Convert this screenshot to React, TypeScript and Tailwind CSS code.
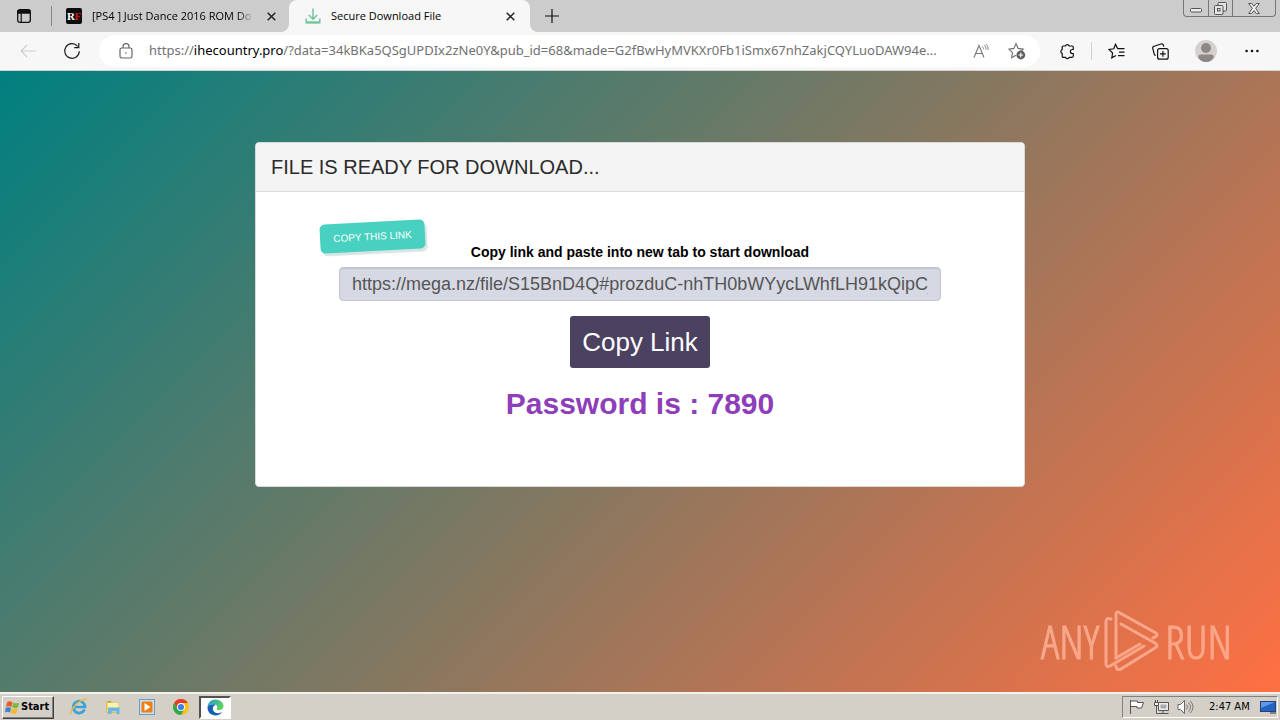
import React from "react";

function TabActionsIcon() {
  return (
    <svg width="14" height="14" viewBox="0 0 14 14" fill="none" stroke="#111">
      <rect x="0.7" y="0.7" width="12.6" height="12.6" rx="2" strokeWidth="1.3" />
      <path d="M1 1.5h12v2.7H1z" fill="#111" />
      <path d="M4.2 4v9" strokeWidth="1.2" />
    </svg>
  );
}

function CloseIcon() {
  return (
    <svg width="9" height="9" viewBox="0 0 9 9" stroke="#222" strokeWidth="1.5">
      <path d="M0.7 0.7l7.6 7.6M8.3 0.7L0.7 8.3" />
    </svg>
  );
}

function DownloadIcon() {
  return (
    <svg width="16" height="16" viewBox="0 0 16 16" fill="none" stroke="#6fc69b" strokeWidth="1.5">
      <path d="M8 0.5v10.5M3.8 7L8 11.2 12.2 7" />
      <path d="M1.2 10.5v4.2h13.6v-4.2" />
      <path d="M1.5 14.3h13" strokeWidth="2" />
    </svg>
  );
}

function BackIcon() {
  return (
    <svg width="16" height="14" viewBox="0 0 16 14" fill="none" stroke="#cfcfcf" strokeWidth="1.2">
      <path d="M16 7H1M7 1L1 7l6 6" />
    </svg>
  );
}

function ReloadIcon() {
  return (
    <svg width="18" height="18" viewBox="0 0 18 18" fill="none" stroke="#1b1b1b" strokeWidth="1.2">
      <path d="M16.3 9.2A7.3 7.3 0 1 1 14.6 4.3" />
      <path d="M15.8 1v4.6h-4.6" />
    </svg>
  );
}

function LockIcon() {
  return (
    <svg width="14" height="16" viewBox="0 0 14 16" fill="none" stroke="#666" strokeWidth="1.2">
      <rect x="1" y="5" width="12" height="10" rx="1.8" />
      <path d="M4 5V3.6a3 3 0 0 1 6 0V5" />
      <circle cx="7" cy="10" r="0.8" fill="#666" stroke="none" />
    </svg>
  );
}

function ReadAloudIcon() {
  return (
    <svg width="16" height="16" viewBox="0 0 16 16" fill="none" stroke="#777" strokeWidth="1.1">
      <path d="M1 14.5L6 2.5 11 14.5M2.8 10.5h6.6" />
      <path d="M9 3.3c1 .8 1.4 1.8 1.4 3M11 1.9c1.4 1.2 2.1 2.6 2 4.6M12.8 1c1.7 1.5 2.5 3.5 2.3 6" strokeWidth="0.9" />
    </svg>
  );
}

function StarAddIcon() {
  return (
    <svg width="18" height="18" viewBox="0 0 18 18" fill="none" stroke="#6b6b6b" strokeWidth="1.1">
      <path d="M8 13.3l-4.4 2.4.9-5L.9 7.1l5-.7L8 1.6l2.2 4.8 5 .7-1.8 1.7" />
      <circle cx="12.8" cy="13" r="4.4" fill="#5b5b5b" stroke="none" />
      <path d="M12.8 10.6v4.8M10.4 13h4.8" stroke="#fff" />
    </svg>
  );
}

function PuzzleIcon() {
  return (
    <svg width="16" height="17" viewBox="0 0 16 17" fill="none" stroke="#111" strokeWidth="1.2" strokeLinejoin="round">
      <path d="M4.2 3h2.2a2 2 0 0 1 3.8 0h2.9c.7 0 1.2.5 1.2 1.2v2.3h-.9a2 2 0 0 0 0 4h.9v2.6c0 .7-.5 1.2-1.2 1.2h-2.8a2 2 0 0 1-3.8 0H4.4c-.7 0-1.2-.5-1.2-1.2v-2.7a2 2 0 0 1 0-3.8V4.2C3.2 3.5 3.5 3 4.2 3z" />
    </svg>
  );
}

function FavoritesIcon() {
  return (
    <svg width="18" height="16" viewBox="0 0 18 16" fill="none" stroke="#111" strokeWidth="1.2">
      <path d="M8 12.5l-4.2 2.3.8-4.8L1 6.5l4.800-.7L7.500 1.300l2.200 4.300h6.800M11 9.100h5.500M10 12.600h6.500" />
    </svg>
  );
}

function CollectionsIcon() {
  return (
    <svg width="17" height="17" viewBox="0 0 17 17" fill="none" stroke="#111" strokeWidth="1.2">
      <rect x="5.6" y="5.6" width="10.6" height="10.6" rx="2" />
      <path d="M10.9 8v5.8M8 10.9h5.8" />
      <path d="M3.8 12.4a2 2 0 0 1-1.6-1.4L.8 5.7a2 2 0 0 1 1.4-2.5L8.9 1a2 2 0 0 1 2.6 1.3l.3 1.3" />
    </svg>
  );
}

function ProfileIcon() {
  return (
    <svg width="22" height="22" viewBox="0 0 22 22">
      <circle cx="11" cy="11" r="11" fill="#d4d0ce" />
      <circle cx="11" cy="8" r="5" fill="#8c8886" />
      <path d="M3.2 17.2c0-2 1.4-2.7 3-2.7h9.6c1.6 0 3 .7 3 2.7C17.4 20 14.5 22 11 22s-6.4-2-7.8-4.8z" fill="#8c8886" />
    </svg>
  );
}

function WindowButtons() {
  return (
    <div className="flex h-[17px] w-[93px] rounded-b border border-t-0 border-[#777] text-[#555]">
      <button aria-label="Minimize" className="flex flex-1 items-center justify-center border-r border-[#777]">
        <svg width="12" height="15" viewBox="0 0 12 15" fill="#eee" stroke="#555">
          <rect x="0.5" y="7.5" width="11" height="3.5" rx="1" />
        </svg>
      </button>
      <button aria-label="Restore" className="flex flex-1 items-center justify-center border-r border-[#777]">
        <svg width="13" height="13" viewBox="0 0 13 13" fill="#e4e4e4" stroke="#555">
          <rect x="4" y="0.5" width="8.5" height="8.5" rx="1" />
          <rect x="0.5" y="3.5" width="8.5" height="9" rx="1" />
          <rect x="3.5" y="6.5" width="2.5" height="2.5" />
        </svg>
      </button>
      <button aria-label="Close window" className="flex w-[42px] items-center justify-center">
        <svg width="12" height="11" viewBox="0 0 12 11" fill="#eee" stroke="#555">
          <path d="M.7.5h3L6 3.2 8.3.5h3L7.7 5.3l3.6 5.2h-3L6 7.6l-2.3 2.9h-3l3.6-5.2z" />
        </svg>
      </button>
    </div>
  );
}

function TabBar() {
  return (
    <header className="flex h-8 justify-between bg-[#f7f7f7]">
      <div className="flex min-w-0">
        <div className="flex w-[289px] rounded-br-lg bg-[#cccccc]">
          <button aria-label="Tab actions" className="flex w-[51px] items-center pl-[17px]">
            <TabActionsIcon />
          </button>
          <div className="my-[6px] w-px bg-[#888]" />
          <div className="flex w-[237px] items-center pl-[14px] pr-[13px]">
            <svg width="16" height="16" viewBox="0 0 16 16" className="shrink-0">
              <rect width="16" height="16" rx="2" fill="#0b0b0b" />
              <text x="1" y="12" fontSize="11" fontWeight="700" fontFamily="Liberation Serif, serif" fill="#fff">R</text>
              <text x="8.5" y="12" fontSize="11" fontWeight="700" fontFamily="Liberation Serif, serif" fill="#d01818">F</text>
            </svg>
            <span className="ml-[10px] whitespace-nowrap bg-linear-to-r from-black from-90% to-[#aaa] bg-clip-text text-[11px] text-transparent">
              [PS4 ] Just Dance 2016 ROM Do
            </span>
            <button aria-label="Close first tab" className="ml-auto">
              <CloseIcon />
            </button>
          </div>
        </div>
        <div className="bg-[#cccccc]">
          <div className="flex h-8 w-[241px] items-center rounded-t-lg bg-[#f7f7f7] pl-[16px] pr-[15px]">
            <DownloadIcon />
            <span className="ml-[10px] text-[11px] text-black">Secure Download File</span>
            <button aria-label="Close second tab" className="ml-auto">
              <CloseIcon />
            </button>
          </div>
        </div>
      </div>
      <div className="flex flex-1 justify-between rounded-bl-lg bg-[#cccccc] pr-1">
        <button aria-label="New tab" className="flex w-[43px] items-center justify-center">
          <svg width="14" height="14" viewBox="0 0 14 14" stroke="#111" strokeWidth="1.2">
            <path d="M7 0v14M0 7h14" />
          </svg>
        </button>
        <WindowButtons />
      </div>
    </header>
  );
}

function Toolbar() {
  return (
    <nav className="flex h-[39px] items-center border-b border-[#d4d4d4] bg-[#f7f7f7]">
      <button aria-label="Back" className="ml-[20px]">
        <BackIcon />
      </button>
      <button aria-label="Refresh" className="ml-[27px]">
        <ReloadIcon />
      </button>
      <div className="ml-[18px] flex h-8 min-w-0 flex-1 items-center rounded-full bg-white pl-[20px] pr-[14px]">
        <LockIcon />
        <p className="ml-[16px] min-w-0 flex-1 overflow-hidden whitespace-nowrap font-['Noto_Sans',sans-serif] text-[13px] text-[#717171]">
          https://<span className="text-black">ihecountry.pro</span>
          /?data=34kBKa5QSgUPDIx2zNe0Y&amp;pub_id=68&amp;made=G2fBwHyMVKXr0Fb1iSmx67nhZakjCQYLuoDAW94e...
        </p>
        <button aria-label="Read aloud" className="ml-[12px]">
          <ReadAloudIcon />
        </button>
        <button aria-label="Add to favorites" className="ml-[19px]">
          <StarAddIcon />
        </button>
      </div>
      <div className="flex w-[240px] shrink-0 items-center pl-[19px]">
        <button aria-label="Extensions"><PuzzleIcon /></button>
        <div className="ml-[16px] h-[18px] w-px bg-[#d0d0d0]" />
        <button aria-label="Favorites" className="ml-[16px]"><FavoritesIcon /></button>
        <button aria-label="Collections" className="ml-[26px]"><CollectionsIcon /></button>
        <button aria-label="Profile" className="ml-[26px]"><ProfileIcon /></button>
        <button aria-label="Settings and more" className="ml-[28px]">
          <svg width="14" height="4" viewBox="0 0 14 4" fill="#111">
            <circle cx="1.6" cy="2" r="1.3" />
            <circle cx="7" cy="2" r="1.3" />
            <circle cx="12.4" cy="2" r="1.3" />
          </svg>
        </button>
      </div>
    </nav>
  );
}

function DownloadCard() {
  return (
    <section className="mx-auto w-full max-w-[770px] rounded border border-[#d9d9d9] bg-white pb-16 font-['Liberation_Sans',Arial,sans-serif]">
      <h1 className="rounded-t border-b border-[#dcdcdc] bg-[#f4f4f4] px-[15px] py-3 text-[20px] leading-6 text-[#2b2b2b]">
        FILE IS READY FOR DOWNLOAD...
      </h1>
      <div className="relative flex flex-col items-center pt-[52px]">
        <span className="absolute left-[64px] top-[30px] flex h-[29px] w-[105px] -rotate-3 items-center justify-center rounded-[5px] bg-[#48d1c0] text-[10px] text-white shadow-[2px_3px_1px_#d9e4e4]">
          COPY THIS LINK
        </span>
        <label htmlFor="link" className="text-[14px] font-bold leading-4 text-black">
          Copy link and paste into new tab to start download
        </label>
        <input
          id="link"
          readOnly
          value="https://mega.nz/file/S15BnD4Q#prozduC-nhTH0bWYycLWhfLH91kQipC_"
          className="mt-[7px] h-[34px] w-[602px] max-w-full rounded border border-[#c3c6cc] bg-[#d6d9e3] px-3 text-[18px] text-[#555] shadow-[inset_0_1px_1px_#bfc2ca]"
        />
        <button className="mt-[15px] h-[52px] w-[140px] rounded-[3px] bg-[#4b4160] text-[26px] text-white">
          Copy Link
        </button>
        <p className="mt-[18px] text-[30px] font-bold leading-9 text-[#8d3eb8]">Password is : 7890</p>
      </div>
    </section>
  );
}

function Watermark() {
  return (
    <div className="absolute bottom-[20px] right-[48px] flex items-center gap-[5px] font-['Open_Sans_Condensed_Light','Open_Sans_Condensed',sans-serif] text-[46px] font-light leading-[62px] text-[#ffb49b] opacity-80 [-webkit-text-stroke:1px_#ffb49b]">
      <span>ANY</span>
      <svg width="56" height="62" viewBox="0 0 56 62" fill="none" stroke="currentColor" strokeWidth="3" strokeLinejoin="round" strokeLinecap="round">
        <path d="M7 9Q2 7 2 12V53Q2 58 6 56L40 36" />
        <path d="M12 48V5Q12 0 16 3L52 23Q55 26 49 28" />
        <path d="M17 14L51 33Q55 36 51 38L17 59Q12 61 12 56" />
        <path d="M12 48L36 34" />
      </svg>
      <span>RUN</span>
    </div>
  );
}

function Taskbar() {
  return (
    <footer className="flex h-7 items-center justify-between border-t-2 border-[#f3f1ec] bg-[#d4d0c8] px-0.5">
      <div className="flex items-center">
        <button className="flex h-[23px] w-[52px] items-center gap-px border border-b-[#404040] border-l-white border-r-[#404040] border-t-white pl-0.5 font-['DejaVu_Sans_Condensed','DejaVu_Sans',sans-serif] text-[11px] font-bold text-black shadow-[inset_-1px_-1px_0_#808080]">
          <svg width="15" height="15" viewBox="0 0 16 16" className="shrink-0">
            <path d="M2.5 2C4 1 6 1 8 2.3L6.7 7.5C4.8 6.3 3 6.3 1 7.2z" fill="#e8592b" />
            <path d="M8.9 2.6c2 1.2 4 1.2 6.3.2L13.8 8c-2.1 1-4.2 1-6.2-.2z" fill="#7fb83c" />
            <path d="M.8 8.3c2-1 3.8-.9 5.7.2L5.2 13.4c-1.8-1.1-3.6-1.1-5.2-.3z" fill="#3e83cc" />
            <path d="M7.3 8.9c2 1.2 4.2 1.2 6.2.2L12.2 14c-2.2 1-4.2.9-6.2-.2z" fill="#f6b92c" />
          </svg>
          Start
        </button>
        <button aria-label="Internet Explorer" className="ml-[16px]">
          <svg width="18" height="18" viewBox="0 0 18 18" fill="none">
            <path d="M14.5 11.5A5.9 5.9 0 1 1 15 9H5" stroke="#38a2dc" strokeWidth="2.7" />
            <path d="M1 16.2C-.3 14 3 8.5 8 4.8S16.5.5 16.8 2.2" stroke="#e9ba43" strokeWidth="1.5" />
          </svg>
        </button>
        <button aria-label="Explorer" className="ml-[17px]">
          <svg width="16" height="16" viewBox="0 0 16 16">
            <path d="M1 2h5l1 1.5h7V14H1z" fill="#e3bd58" />
            <path d="M2.5 4h11v9h-11z" fill="#fff2a9" />
            <path d="M3 8.5h11.5V15h-3v-2.5h-5V15H3z" fill="#68b8df" />
            <path d="M3.5 2.8h2" stroke="#3fa34d" />
          </svg>
        </button>
        <button aria-label="Media Player" className="ml-[18px]">
          <svg width="16" height="16" viewBox="0 0 16 16">
            <rect x="0.5" y="0.5" width="15" height="15" fill="#c7dfef" stroke="#6c9fc4" />
            <rect x="2.5" y="2.5" width="11" height="11" rx="1.5" fill="#f47d12" />
            <path d="M5.5 4l6 4-6 4z" fill="#fff" />
          </svg>
        </button>
        <button aria-label="Chrome" className="ml-[18px]">
          <svg width="16" height="16" viewBox="0 0 16 16">
            <circle cx="8" cy="8" r="8" fill="#fbc116" />
            <path d="M1.07 4A8 8 0 0 1 14.93 4H8L4.54 10z" fill="#e33b2e" />
            <path d="M1.07 4A8 8 0 0 0 8 16l3.46-6H4.54z" fill="#2da94f" />
            <circle cx="8" cy="8" r="4" fill="#fff" />
            <circle cx="8" cy="8" r="3.1" fill="#4080ed" />
          </svg>
        </button>
        <button aria-label="Edge" className="ml-[10px] flex h-[23px] w-[32px] items-center justify-center border-2 border-b-white border-l-[#505050] border-r-white border-t-[#505050] bg-white">
          <svg width="17" height="17" viewBox="0 0 17 17">
            <defs>
              <linearGradient id="edge-top" x1="0" y1="0" x2="1" y2="0.5">
                <stop offset="0" stopColor="#2499d8" />
                <stop offset="1" stopColor="#5bd45b" />
              </linearGradient>
            </defs>
            <path d="M.5 8.5C.5 3.8 4 .5 8.5.5s8 3.2 8 6.5c0 2.600-2 4-4.200 4-1.600 0-2.600-.5-2.600-1.100 0-.5.6-.7.6-1.700C10.300 6.500 8.500 5.300 6.200 5.300 3.200 5.300.7 7 .5 8.500z" fill="url(#edge-top)" />
            <path d="M.5 8.500c.2-1.800 2.700-3.200 5.700-3.200 1 0 1.900.2 2.600.6C6.500 6.300 5.800 8 5.800 9.500c0 3 2.600 4.700 5.400 4.700 1.500 0 2.700-.4 3.800-1.100-1.300 2.100-3.700 3.400-6.500 3.400-4.600 0-8-3.600-8-8z" fill="#1560b3" />
          </svg>
        </button>
      </div>
      <div className="flex h-[22px] w-[156px] items-center border border-b-white border-l-[#808080] border-r-white border-t-[#808080] pl-[6px]">
        <svg width="17" height="16" viewBox="0 0 17 16" fill="#fff" stroke="#555">
          <path d="M1.5 1v14M2 2h6.5v1.5h6L12.5 9H8V7.5H2" />
        </svg>
        <svg width="17" height="16" viewBox="0 0 17 16" fill="#eee" stroke="#555" className="ml-[7px]">
          <path d="M5.5 3.5h10v8h-10zM4.5 14.5h11M10 12v2" />
          <rect x="7.5" y="5.5" width="6" height="4" fill="#aaa" stroke="none" />
          <path d="M1.5 3.5h4v3h-4zM2.5 1v2.5M4.5 1v2.5M3.5 6.5v8h2" />
        </svg>
        <svg width="17" height="16" viewBox="0 0 17 16" fill="#fff" stroke="#666" className="ml-[7px]">
          <path d="M1 5.5h2.5L7.5 1.5v13L3.5 10.5H1z" />
          <path d="M9.5 5.5q2 2.5 0 5M11.5 3.5q4 4.5 0 9M13.5 2q5 6 0 12" fill="none" strokeWidth="0.8" />
        </svg>
        <time className="ml-[15px] whitespace-nowrap font-['DejaVu_Sans_Condensed','DejaVu_Sans',sans-serif] text-[11px] text-black">2:47 AM</time>
        <svg width="16" height="13" viewBox="0 0 16 13" className="ml-[10px] shrink-0">
          <rect x="0.5" y="0.5" width="15" height="10" fill="#2462c6" stroke="#23406f" />
          <path d="M1 1h14L1 7z" fill="#5d9be8" />
          <path d="M10 12h6" stroke="#333" />
        </svg>
      </div>
    </footer>
  );
}

export default function App() {
  return (
    <div className="flex min-h-screen flex-col font-['Open_Sans','Noto_Sans',sans-serif]">
      <TabBar />
      <Toolbar />
      <main className="relative flex-1 bg-[linear-gradient(135deg,#008080,#ff7043)] px-4 pb-[120px] pt-[71px]">
        <DownloadCard />
        <Watermark />
      </main>
      <Taskbar />
    </div>
  );
}
